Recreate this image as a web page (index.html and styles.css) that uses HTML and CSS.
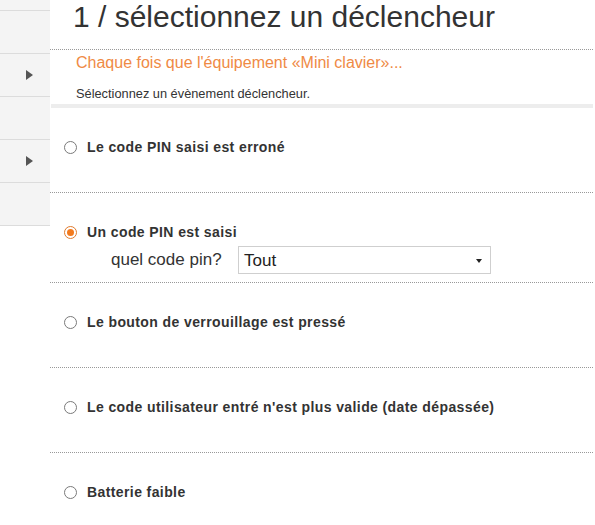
FILE: index.html
```html
<!DOCTYPE html>
<html lang="fr">
<head>
<meta charset="utf-8">
<title>Déclencheur</title>
<link rel="stylesheet" href="styles.css">
</head>
<body>
<div class="page">
  <nav class="sidebar">
    <div class="nav-row nav-top"></div>
    <div class="nav-row"></div>
    <div class="nav-row"><span class="nav-arrow"></span></div>
    <div class="nav-row"></div>
    <div class="nav-row"><span class="nav-arrow"></span></div>
    <div class="nav-row"></div>
  </nav>
  <main class="main">
    <header class="head">
      <h1 class="title">1 / sélectionnez un déclencheur</h1>
    </header>
    <p class="subtitle">Chaque fois que l'équipement «Mini clavier»...</p>
    <p class="hint">Sélectionnez un évènement déclencheur.</p>
    <div class="bar"></div>
    <ul class="options">
      <li class="option">
        <label class="opt-label"><input type="radio" name="trig" class="radio"><span>Le code PIN saisi est erroné</span></label>
      </li>
      <li class="option option-open">
        <label class="opt-label"><input type="radio" name="trig" class="radio" checked><span>Un code PIN est saisi</span></label>
        <div class="sub-row">
          <span class="sub-label">quel code pin?</span>
          <div class="select"><span>Tout</span><span class="caret"></span></div>
        </div>
      </li>
      <li class="option">
        <label class="opt-label"><input type="radio" name="trig" class="radio"><span>Le bouton de verrouillage est pressé</span></label>
      </li>
      <li class="option">
        <label class="opt-label"><input type="radio" name="trig" class="radio"><span>Le code utilisateur entré n'est plus valide (date dépassée)</span></label>
      </li>
      <li class="option option-last">
        <label class="opt-label"><input type="radio" name="trig" class="radio"><span>Batterie faible</span></label>
      </li>
    </ul>
  </main>
</div>
</body>
</html>
```
FILE: styles.css
```css
html, body {
  margin: 0;
  padding: 0;
  background: #fff;
  font-family: "Liberation Sans", Arial, sans-serif;
  color: #333;
}
.page {
  display: flex;
  align-items: flex-start;
  width: 595px;
  height: 525px;
  overflow: hidden;
}
.sidebar {
  width: 50px;
  flex: 0 0 50px;
  background: #f4f4f4;
  display: flex;
  flex-direction: column;
}
.nav-row {
  height: 42px;
  border-bottom: 1px solid #dcdcdc;
  display: flex;
  align-items: center;
  justify-content: flex-end;
  padding-right: 17px;
}
.nav-top {
  height: 10px;
}
.nav-arrow {
  width: 0;
  height: 0;
  border-top: 5px solid transparent;
  border-bottom: 5px solid transparent;
  border-left: 7px solid #555;
}
.main {
  flex: 1;
  padding-right: 2px;
}
.head {
  height: 50px;
  border-bottom: 1px dotted #999;
  box-sizing: border-box;
}
.title {
  margin: 0;
  padding-left: 23px;
  font-size: 30px;
  line-height: 34px;
  font-weight: normal;
  color: #333;
}
.subtitle {
  margin: 4px 0 0;
  padding-left: 26px;
  font-size: 16px;
  line-height: 18px;
  color: #ef8a45;
}
.hint {
  margin: 15px 0 0;
  padding-left: 26px;
  font-size: 12.8px;
  line-height: 14px;
  color: #333;
}
.bar {
  margin-top: 3px;
  height: 4px;
  background: #ededed;
  margin-left: 1px;
}
.options {
  list-style: none;
  margin: 0;
  padding: 0;
}
.option {
  padding: 31px 0 37px 14px;
  border-bottom: 1px dotted #999;
}
.option-open {
  padding-bottom: 8px;
}
.option-last {
  border-bottom: none;
}
.opt-label {
  display: flex;
  align-items: center;
  gap: 10px;
  height: 16px;
  font-size: 14px;
  letter-spacing: 0.4px;
  font-weight: bold;
  color: #333;
}
.radio {
  appearance: none;
  -webkit-appearance: none;
  margin: 0;
  width: 13px;
  height: 13px;
  border: 1px solid #7a7a7a;
  border-radius: 50%;
  background: #fff;
  box-sizing: border-box;
  position: relative;
}
.radio:checked {
  border-color: #e07b2e;
}
.radio:checked::after {
  content: "";
  position: absolute;
  left: 2px;
  top: 2px;
  width: 7px;
  height: 7px;
  border-radius: 50%;
  background: #f27a1e;
}
.sub-row {
  display: flex;
  align-items: center;
  gap: 10px;
  margin-top: 6px;
  padding-left: 47px;
}
.sub-label {
  width: 117px;
  font-size: 17px;
  white-space: nowrap;
  color: #333;
}
.select {
  width: 253px;
  height: 28px;
  box-sizing: border-box;
  border: 1px solid #cfcfcf;
  display: flex;
  align-items: center;
  justify-content: space-between;
  padding: 2px 8px 0 5px;
  font-size: 17px;
  color: #222;
}
.caret {
  width: 0;
  height: 0;
  border-left: 3.5px solid transparent;
  border-right: 3.5px solid transparent;
  border-top: 4px solid #222;
  margin-top: -1px;
}
```
